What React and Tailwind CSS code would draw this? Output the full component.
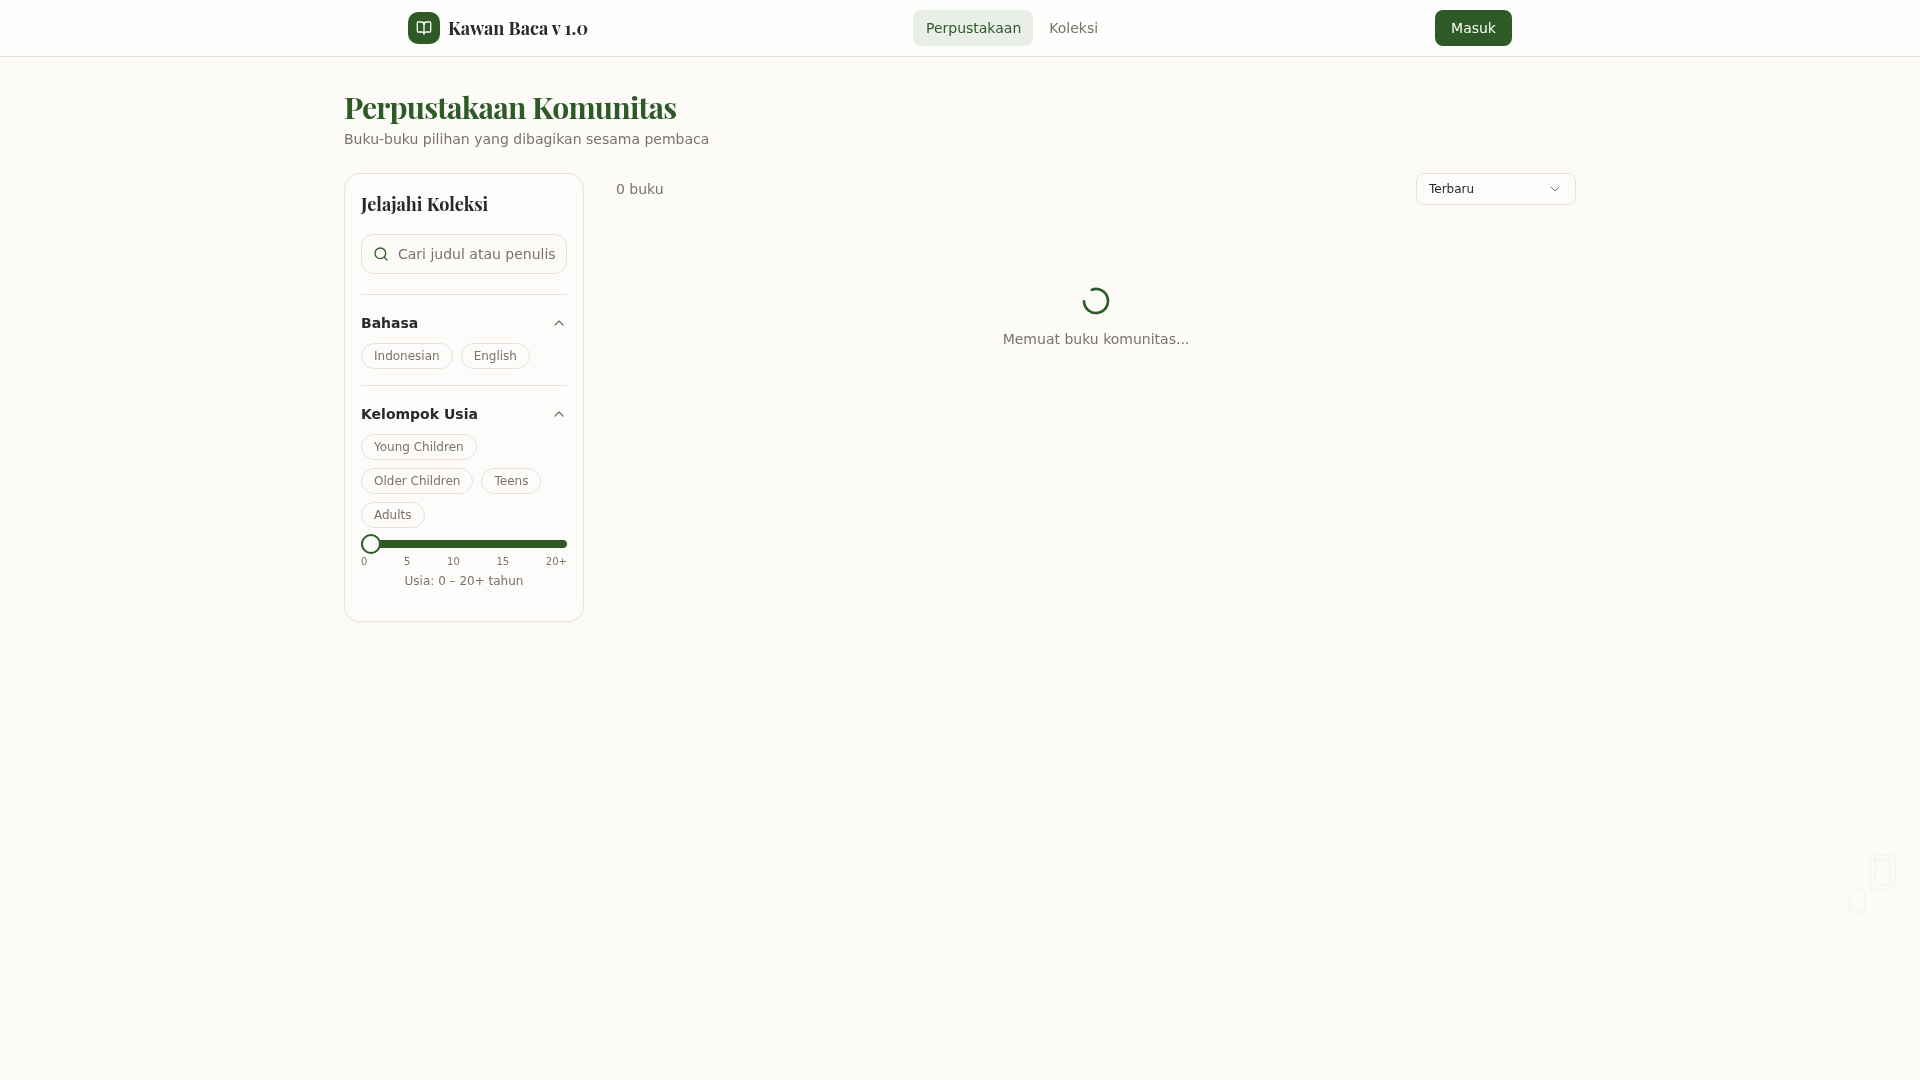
import React from "react";
import { BookOpen, Search, ChevronUp, ChevronDown } from "lucide-react";

const serif = "font-['Playfair_Display','Liberation_Serif',serif]";

function Chip({ children }) {
  return (
    <button className="h-[26px] px-3 rounded-full border border-[#e8e2da] text-xs leading-none text-[#7a736c] whitespace-nowrap">
      {children}
    </button>
  );
}

function SectionHead({ children }) {
  return (
    <div className="flex items-center justify-between h-5 mb-2">
      <span className="text-sm font-bold text-[#2a2826]">{children}</span>
      <ChevronUp className="w-4 h-4 text-[#7a736c]" strokeWidth={2} />
    </div>
  );
}

export default function App() {
  return (
    <div className="relative min-h-screen bg-[#fcfbf7] text-[#2a2826] font-['DejaVu_Sans',sans-serif] overflow-hidden">
      <svg
        className="absolute left-[1780px] top-[780px] pointer-events-none"
        width="140"
        height="160"
        viewBox="0 0 140 160"
        fill="none"
        stroke="#2d5a27"
      >
        <path strokeOpacity="0.022" d="M80 40 20 140M100 40 40 120M120 40 60 100M120 60 60 140M120 80 60 160" />
        <g strokeOpacity="0.03" strokeWidth="1.5">
          <rect x="95" y="75" width="20" height="30" rx="2" />
          <rect x="90" y="80" width="20" height="30" rx="2" />
          <rect x="70" y="110" width="15" height="22" rx="2" />
        </g>
      </svg>

      <header className="relative h-[57px] bg-[#fefefc]/95 backdrop-blur-sm border-b border-[#e8e2da]">
        <div className="max-w-6xl mx-auto px-6 h-14 flex justify-between items-center">
          <div className="flex items-center gap-2">
            <div className="w-8 h-8 rounded-[10px] bg-[#2d5a27] flex items-center justify-center text-[#fcfbf7]">
              <BookOpen className="w-4 h-4" strokeWidth={2} />
            </div>
            <span className={`${serif} text-lg font-bold text-[#2a2826]`}>Kawan Baca v 1.0</span>
          </div>
          <nav className="flex items-center gap-1 text-sm">
            <a className="h-9 pl-[13px] pr-[12px] rounded-lg bg-[#e9eee9] text-[#2d5a27] flex items-center">Perpustakaan</a>
            <a className="h-9 px-3 rounded-lg text-[#7a736c] flex items-center">Koleksi</a>
          </nav>
          <button className="h-9 px-4 rounded-lg bg-[#2d5a27] text-[#fcfbf7] text-sm">Masuk</button>
        </div>
      </header>

      <main className="relative max-w-7xl mx-auto px-6 pt-8 will-change-transform">
        <h1 className={`${serif} text-3xl font-bold tracking-tight text-[#2d5a27] leading-9`}>Perpustakaan Komunitas</h1>
        <p className="mt-1 text-sm leading-5 text-[#7a736c]">Buku-buku pilihan yang dibagikan sesama pembaca</p>

        <div className="mt-6 flex gap-8 items-start">
          <aside className="w-60 shrink-0 rounded-2xl border border-[#e8e2da] bg-[#fdfcfa] shadow-[0_1px_2px_rgba(0,0,0,0.05)] px-4 pt-4 pb-8">
            <h2 className={`${serif} text-lg font-bold leading-7 text-[#2a2826]`}>Jelajahi Koleksi</h2>
            <div className="mt-4 h-10 rounded-xl border border-[#e8e2da] bg-[#fcfbf7] flex items-center pl-[11px] pr-1 gap-[9px] overflow-hidden">
              <Search className="w-4 h-4 text-[#2d5a27] shrink-0" strokeWidth={2} />
              <span className="text-sm text-[#7a736c] whitespace-nowrap">Cari judul atau penulis</span>
            </div>

            <div className="mt-5 pt-[18px] border-t border-[#e8e2da]">
              <SectionHead>Bahasa</SectionHead>
              <div className="flex flex-wrap gap-2 pt-[2px]">
                <Chip>Indonesian</Chip>
                <Chip>English</Chip>
              </div>
            </div>

            <div className="mt-4 pt-[18px] border-t border-[#e8e2da]">
              <SectionHead>Kelompok Usia</SectionHead>
              <div className="flex flex-wrap gap-x-2 gap-y-2 pt-[2px]">
                <Chip>Young Children</Chip>
                <Chip>Older Children</Chip>
                <Chip>Teens</Chip>
                <Chip>Adults</Chip>
              </div>
              <div className="relative mt-[6px] h-5 flex items-center">
                <div className="w-full h-2 rounded-full bg-[#2d5a27]" />
                <div className="absolute left-0 top-0 w-5 h-5 rounded-full border-2 border-[#2d5a27] bg-[#fdfcfa]" />
              </div>
              <div className="flex justify-between text-[10px] leading-[15px] text-[#7a736c]">
                <span>0</span><span>5</span><span>10</span><span>15</span><span>20+</span>
              </div>
              <p className="mt-1 text-xs leading-4 text-center text-[#7a736c]">Usia: 0 – 20+ tahun</p>
            </div>
          </aside>

          <section className="flex-1 min-w-0">
            <div className="flex items-center justify-between h-8">
              <span className="text-sm text-[#7a736c]">0 buku</span>
              <div className="w-40 h-8 rounded-lg border border-[#e8e2da] bg-[#fdfcfa] flex items-center justify-between pl-3 pr-[12px] text-xs text-[#2a2826]">
                <span>Terbaru</span>
                <ChevronDown className="w-4 h-4 text-[#7a736c]" strokeWidth={1.5} />
              </div>
            </div>
            <div className="pt-20 flex flex-col items-center">
              <svg className="w-8 h-8 text-[#2d5a27] -rotate-[110deg]" viewBox="0 0 24 24" fill="none" stroke="currentColor" strokeWidth="2" strokeLinecap="round" strokeLinejoin="round">
                <path d="M21 12a9 9 0 1 1-6.219-8.56" />
              </svg>
              <p className="mt-3 text-sm leading-5 text-[#7a736c]">Memuat buku komunitas...</p>
            </div>
          </section>
        </div>
      </main>
    </div>
  );
}
